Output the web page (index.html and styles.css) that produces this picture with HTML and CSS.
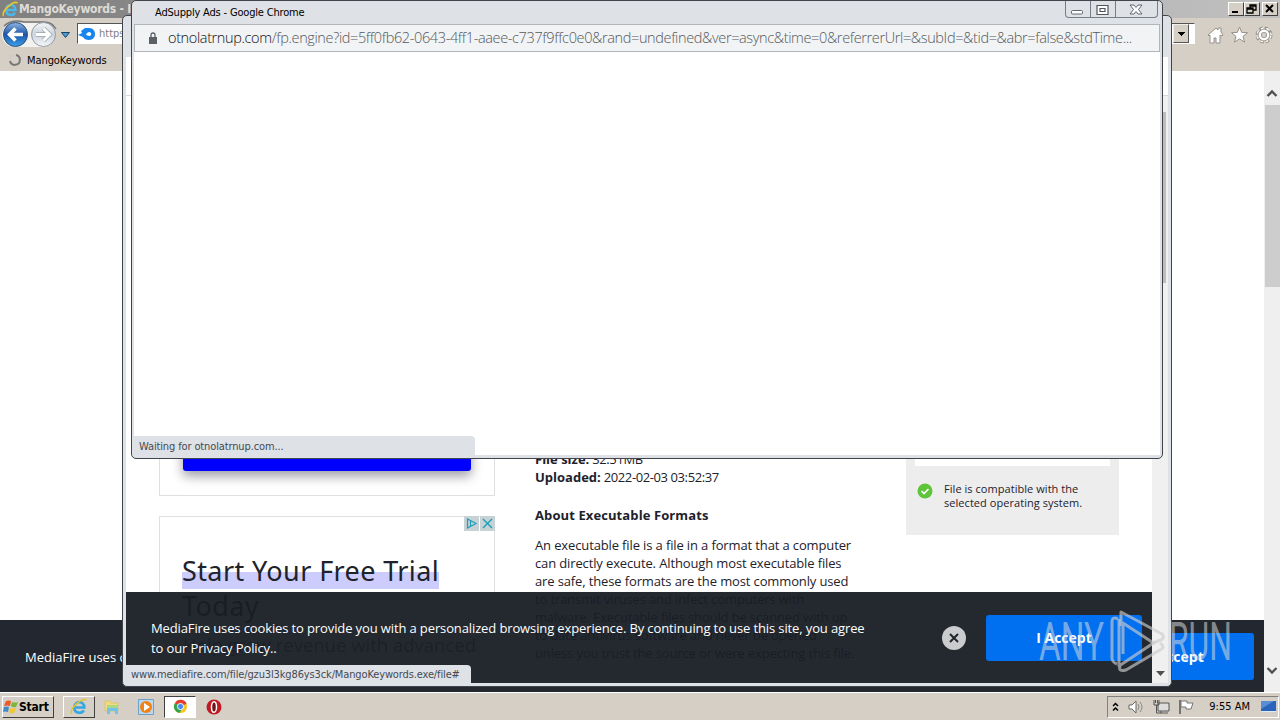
FILE: index.html
```html
<!DOCTYPE html>
<html lang="en">
<head>
<meta charset="utf-8">
<title>MangoKeywords</title>
<link rel="stylesheet" href="styles.css">
</head>
<body>
<div class="desktop">

    <!-- Internet Explorer -->
    <div class="ie">
        <div class="ie-title">
            <svg class="ie-logo" width="17" height="17" viewBox="0 0 17 17"><path d="M4 9h9.500C13.500 2 4 2.500 4 9c0 6 7.500 6 9 2.500" fill="none" stroke="#4bb8ec" stroke-width="2.500"/><path d="M1.500 15C-1 10 12-1 15.500 2" fill="none" stroke="#e3c52c" stroke-width="1.700"/></svg>
            <b>MangoKeywords - Internet Explorer</b>
            <div class="win-buttons">
                <span><svg width="14" height="12"><path d="M3 9h6" stroke="#000" stroke-width="2"/></svg></span>
                <span><svg width="14" height="12"><path d="M5 5V2h6v5H8M5 3h6M2 5h6v5H2zM2 6h6" fill="none" stroke="#000" stroke-width="1.300"/></svg></span>
                <span class="gap"><svg width="14" height="12"><path d="M3 2l7 7M10 2l-7 7" stroke="#000" stroke-width="2"/></svg></span>
            </div>
        </div>
        <div class="ie-nav">
            <svg class="ie-arrows" width="74" height="30" viewBox="0 0 74 30">
                <defs>
                    <linearGradient id="blue" x2="0" y2="1"><stop offset="0" stop-color="#8fb5e2"/><stop offset=".5" stop-color="#1d55a8"/><stop offset="1" stop-color="#3da0ea"/></linearGradient>
                    <linearGradient id="pale" x2="0" y2="1"><stop offset="0" stop-color="#f4f6f8"/><stop offset=".5" stop-color="#cbd3dc"/><stop offset="1" stop-color="#f5f8fb"/></linearGradient>
                </defs>
                <path d="M15 4h28a11 12 0 0 1 0 24H15A13 12 0 0 1 15 4" fill="#f3f2ef"/>
                <path d="M4 7Q12 0 24 3h20q8 0 12 7" fill="none" stroke="#777" stroke-width="1.500"/>
                <circle cx="15.500" cy="15.500" r="12" fill="url(#blue)" stroke="#28527f"/>
                <path d="M23 15.500H10M15.500 9.500l-6 6 6 6" fill="none" stroke="#fff" stroke-width="3.500"/>
                <circle cx="43.500" cy="15.500" r="12" fill="url(#pale)" stroke="#929ba5"/>
                <path d="M36 15.500h13M43.500 9.500l6 6-6 6" fill="none" stroke="#9aa3ac" stroke-width="4.500"/>
                <path d="M36 15.500h13M43.500 9.500l6 6-6 6" fill="none" stroke="#fff" stroke-width="3"/>
                <path d="M61.500 13.500h8l-4 5z" fill="#4b9bd4" stroke="#174468"/>
            </svg>
            <div class="ie-address">
                <svg width="18" height="14" viewBox="0 0 18 14"><path fill-rule="evenodd" d="M0 8l4-2-1-2 4-3h4c4 0 6 3 6 6s-2 6-6 6c-3 0-5-1-6-3zM8 8l3 1c3 0 3-4 0-4L9 6z" fill="#1685ee"/></svg>
                <span>https://www.mediafire.com/</span>
                <i class="drop"></i>
            </div>
            <svg class="ie-tools" width="72" height="20" viewBox="0 0 72 20">
                <g fill="#fff" stroke="#969188">
                    <path d="M2 10l8-7 2 2V3h3v4l2 3-1 1-2-1v8h-4v-5H8v5H4v-8l-1 1z"/>
                    <path d="M33.500 2l2.200 5.400 5.800.3-4.500 3.700 1.500 5.700-5-3.200-5 3.200 1.500-5.700-4.500-3.700 5.800-.3z"/>
                </g>
                <circle cx="58" cy="10" r="6.500" fill="none" stroke="#969188" stroke-width="4" stroke-dasharray="3.200 1.900"/>
                <circle cx="58" cy="10" r="6.300" fill="none" stroke="#fff" stroke-width="2.600" stroke-dasharray="2.200 2.900" stroke-dashoffset="-.5"/>
                <circle cx="58" cy="10" r="4.200" fill="none" stroke="#969188" stroke-width="4"/>
                <circle cx="58" cy="10" r="4.200" fill="none" stroke="#fff" stroke-width="2.400"/>
            </svg>
        </div>
        <div class="ie-tabs">
            <svg width="14" height="14" viewBox="0 0 14 14"><path d="M5 2a5 5 0 0 0-3 4" fill="none" stroke="#ccc" stroke-width="2"/><path d="M8 2a5 5 0 1 1-6 6" fill="none" stroke="#777" stroke-width="2"/></svg>
            <span>MangoKeywords</span>
        </div>
        <div class="ie-body">
            <div class="ie-page">
                <div class="ie-cookie"><span>MediaFire uses cookies</span><b>I Accept</b></div>
            </div>
            <div class="ie-scroll">
                <svg width="16" height="10"><path d="M3.500 8L8 3.500 12.500 8" fill="none" stroke="#505050" stroke-width="2.300"/></svg>
                <i></i>
                <svg class="down" width="16" height="10"><path d="M3.500 2L8 6.500 12.500 2" fill="none" stroke="#505050" stroke-width="2.300"/></svg>
            </div>
        </div>
    </div>

    <!-- Chrome with the MediaFire page -->
    <div class="chrome back">
        <div class="back-title"></div>
        <div class="back-bar"></div>
        <div class="back-body">
            <div class="page">
                <div class="ads">
                    <div class="ad first"><div class="blue-button"></div></div>
                    <div class="ad second">
                        <div class="ad-choice">
                            <svg width="15" height="15"><path d="M3.500 3v9l8.500-4.500z M6.500 5v5" fill="none" stroke="#1b9fb9" stroke-width="1.200"/></svg>
                            <svg width="15" height="15"><path d="M3 3l9 9M12 3l-9 9" stroke="#1b9fb9" stroke-width="1.400"/></svg>
                        </div>
                        <h2><span>Start Your Free Trial</span><br>Today</h2>
                        <p>Help grow revenue with advanced</p>
                    </div>
                </div>
                <div class="info">
                    <div class="meta"><b>File size:</b> 32.51MB</div>
                    <div class="meta"><b>Uploaded:</b> 2022-02-03 03:52:37</div>
                    <h3>About Executable Formats</h3>
                    <p>An executable file is a file in a format that a computer<br>can directly execute. Although most executable files<br>are safe, these formats are the most commonly used<br>to transmit viruses and infect computers with<br>malware. Executable files should be scanned with up<br>to date antivirus software and never be opened<br>unless you trust the source or were expecting this file.</p>
                </div>
                <div class="compat">
                    <div class="system">Copy of system</div>
                    <div class="compat-row">
                        <svg width="16" height="16" viewBox="0 0 16 16"><circle cx="8" cy="8" r="7.500" fill="#5ec439"/><path d="M4.500 8l2.500 2.500 4.500-4.500" fill="none" stroke="#fff" stroke-width="1.700"/></svg>
                        <span>File is compatible with the<br>selected operating system.</span>
                    </div>
                </div>
                <div class="cookie">
                    <p>MediaFire uses cookies to provide you with a personalized browsing experience. By continuing to use this site, you agree<br><span>to our Privacy Policy..</span></p>
                    <svg width="24" height="24"><circle cx="12" cy="12" r="12" fill="#caccce"/><path d="M8 8l8 8M16 8l-8 8" stroke="#20252e" stroke-width="2"/></svg>
                    <b>I Accept</b>
                </div>
                <div class="status link">www.mediafire.com/file/gzu3l3kg86ys3ck/MangoKeywords.exe/file#</div>
            </div>
            <div class="page-scroll"><i></i><svg width="16" height="18"><path d="M4 6h9l-4.500 5z" fill="#505050"/></svg></div>
        </div>
    </div>

    <!-- Popup -->
    <div class="chrome popup">
        <div class="popup-title">
            <span>AdSupply Ads - Google Chrome</span>
            <div class="controls">
                <svg width="24" height="17"><rect x="5.500" y="9.500" width="11" height="3.500" rx="1" fill="#fff" stroke="#646970"/></svg>
                <svg width="24" height="17"><path d="M6 4.500h11v9H6zM9 7.500h5v3H9z" fill="#fff" stroke="#50555c" stroke-width="1.200"/></svg>
                <svg width="41" height="17"><path d="M14 4h4l2 2.500L22 4h4l-3.500 4.500L26 13h-4l-2-2.500-2 2.500h-4l3.500-4.500z" fill="#fff" stroke="#646970"/></svg>
            </div>
        </div>
        <div class="url">
            <svg width="8" height="13" viewBox="0 0 8 13"><path d="M2 6V3q0-2 2-2t2 2v3" fill="none" stroke="#5b6066" stroke-width="1.300"/><path d="M0 5h8v7H0z" fill="#5b6066"/></svg>
            <span class="addr"><em>otnolatrnup.com</em>/fp.engine?id=5ff0fb62-0643-4ff1-aaee-c737f9ffc0e0&amp;rand=undefined&amp;ver=async&amp;time=0&amp;referrerUrl=&amp;subId=&amp;tid=&amp;abr=false&amp;stdTime...</span>
        </div>
        <div class="popup-page"><div class="status waiting">Waiting for otnolatrnup.com...</div></div>
    </div>

    <!-- Taskbar -->
    <div class="taskbar">
        <div class="start">
            <svg width="16" height="16" viewBox="0 0 16 16"><path d="M3 2q3-1 5 0L7 7Q4 6 1 7z" fill="#ec5a28"/><path d="M9 3q3 1 6 0l-2 5q-3 1-5-1z" fill="#7cb63b"/><path d="M1 8q3-1 5 0l-1 5q-3-1-5 0z" fill="#408cc9"/><path d="M7 9q3 1 6 0l-2 5q-3 1-5-1z" fill="#f5c62d"/></svg>
            <b>Start</b>
        </div>
        <div class="task ie-task"><svg width="18" height="18" viewBox="0 0 17 17"><path d="M4 9h9.500C13.500 2 4 2.500 4 9c0 6 7.500 6 9 2.500" fill="none" stroke="#35a7e6" stroke-width="2.500"/><path d="M1.500 15C-1 10 12-1 15.500 2" fill="none" stroke="#e3c52c" stroke-width="1.500"/></svg></div>
        <div class="task"><svg width="16" height="16" viewBox="0 0 16 16"><path d="M1 2h5l1 2h7v8H1z" fill="#f3da7c" stroke="#dcbd55" stroke-width=".7"/><path d="M3 6h11v4H3z" fill="#a9d889"/><path d="M3 15V9h11v6h-3v-3H6v3z" fill="#72c3e9"/></svg></div>
        <div class="task"><svg width="16" height="16" viewBox="0 0 16 16"><path d="M.5.500h15v15H.5z" fill="#b9d7ee" stroke="#6ba1cb"/><circle cx="8" cy="8" r="6" fill="#f08218"/><path d="M6 4v8l6-4z" fill="#fff"/></svg></div>
        <div class="task active"><svg width="15" height="15" viewBox="0 0 16 16"><circle cx="8" cy="8" r="7" fill="#f8c527"/><path d="M8 8L2 4.400A7 7 0 0 1 14.500 5z" fill="#e13e31"/><path d="M8 8L2 4.400A7 7 0 0 0 7 15l3.500-6z" fill="#2fa350"/><circle cx="8" cy="8" r="3.300" fill="#4789ec" stroke="#fff"/></svg></div>
        <div class="task"><svg width="16" height="16" viewBox="0 0 16 16"><circle cx="8" cy="8" r="7.500" fill="#bf1922"/><ellipse cx="8" cy="8" rx="2.500" ry="5.300" fill="#731016" stroke="#fff" stroke-width="1.500"/></svg></div>
        <div class="tray">
            <svg width="9" height="14"><path d="M2 6l2.500-2.500L7 6M2 10.500L4.500 8 7 10.500" fill="none" stroke="#000" stroke-width="1.500"/></svg>
            <svg width="17" height="16"><path d="M1 6h3l4-4v12l-4-4H1z" fill="#fff" stroke="#666"/><path d="M10 5q2 3 0 6M12 3q4 5 0 10" fill="none" stroke="#888"/></svg>
            <svg width="17" height="16"><path d="M5 4h11v8H5zM8 12v2h7" fill="#ddd" stroke="#555"/><path d="M1 1v5h5V1M2.500 1v3M4.500 1v3M3.500 6v8h5" fill="none" stroke="#555"/></svg>
            <svg width="17" height="16"><path d="M2 1v14" stroke="#555" stroke-width="1.500"/><path d="M3 2h6v2h6l-2 6H8V8H3z" fill="#fff" stroke="#777"/></svg>
            <span>9:55 AM</span>
            <svg width="15" height="13"><path d="M0 1h15v10H0z" fill="#2b65bb"/><path d="M0 1h13L0 9z" fill="#588ed4"/><path d="M0 11h15v1H0z" fill="#dfe8f3"/></svg>
        </div>
    </div>

    <svg class="watermark" width="220" height="76" viewBox="0 0 220 76">
        <g fill="#ddd" fill-opacity=".55" font-family="Roboto" font-weight="400" font-size="53">
            <text x="3" y="51" textLength="65" lengthAdjust="spacingAndGlyphs">ANY</text>
            <text x="133" y="51" textLength="63" lengthAdjust="spacingAndGlyphs">RUN</text>
        </g>
        <g fill="none" stroke="#ccc" stroke-opacity=".65" stroke-width="3" stroke-linejoin="round">
            <path d="M82 10q-6-3-6 3v36q0 4 5 6M87 45V14l32 21M85 17V3l41 22q4 5-4 7l-5 2"/>
            <path d="M83 10v47l36-24M84 57q-2 6 6 4l34-20q6-3 0-7"/>
        </g>
    </svg>
</div>
</body>
</html>
```
FILE: styles.css
```css
body {
    margin: 0;
    font-family: "DejaVu Sans Condensed", "DejaVu Sans", sans-serif;
    font-size: 11px;
    color: #000;
}
svg {
    display: block;
    flex-shrink: 0;
}
.desktop {
    position: relative;
    width: 1280px;
    height: 720px;
    overflow: hidden;
    background: #d5cfc6;
}

/* Internet Explorer */
.ie {
    display: flex;
    flex-direction: column;
    height: 692px;
}
.ie-title {
    display: flex;
    align-items: center;
    height: 18px;
    background: linear-gradient(90deg, #808080, #c0c0c0);
    color: #dedbd5;
    font-size: 12px;
    letter-spacing: -.25px;
}
.ie-logo {
    margin: 0 0 0 2px;
}
.win-buttons {
    display: flex;
    margin-left: auto;
    padding-right: 2px;
}
.win-buttons span {
    width: 14px;
    height: 12px;
    background: #d5cfc6;
    border: 1px solid;
    border-color: #fff #404040 #404040 #fff;
}
.win-buttons .gap {
    margin-left: 2px;
}
.ie-nav {
    display: flex;
    align-items: center;
    height: 31px;
}
.ie-address {
    display: flex;
    align-items: center;
    width: 1118px;
    height: 21px;
    box-sizing: border-box;
    border: 1px solid;
    border-color: #555 #fff #fff #555;
    background: #fff;
    margin-left: 3px;
    color: #808080;
    gap: 3px;
    font-size: 11px;
}
.drop {
    margin-left: auto;
    margin-right: 5px;
    width: 14px;
    height: 17px;
    background: linear-gradient(#000, #000) 4px 7px / 7px 1px no-repeat, linear-gradient(#000, #000) 5px 8px / 5px 1px no-repeat, linear-gradient(#000, #000) 6px 9px / 3px 1px no-repeat, linear-gradient(#000, #000) 7px 10px / 1px 1px no-repeat, #d5cfc6;
    border: 1px solid;
    border-color: #eee #555 #555 #eee;
}
.ie-tools {
    margin: 3px 0 0 11px;
}
.ie-tabs {
    display: flex;
    align-items: center;
    height: 22px;
    padding-left: 8px;
    gap: 5px;
    letter-spacing: -.08px;
}
.ie-body {
    display: flex;
    flex: 1;
    background: #fff;
}
.ie-page {
    display: flex;
    flex: 1;
    align-items: flex-end;
}
.ie-cookie {
    display: flex;
    align-items: center;
    justify-content: space-between;
    width: 100%;
    height: 72px;
    box-sizing: border-box;
    padding: 2px 10px 0 25px;
    background: #232830;
    color: #fff;
    font: 13px "Open Sans", sans-serif;
}
.ie-cookie b {
    width: 156px;
    height: 47px;
    margin-top: -2px;
    line-height: 48px;
    text-align: center;
    background: #0070f0;
    border-radius: 3px;
    font-size: 14px;
}
.ie-scroll {
    display: flex;
    flex-direction: column;
    width: 16px;
    padding-top: 17px;
    box-sizing: border-box;
    background: #efefef;
}
.ie-scroll i {
    height: 182px;
    margin: 7px 0 0 1px;
    background: #cdcdcd;
}
.ie-scroll .down {
    margin: auto 0 16px;
}

/* Chrome windows */
.chrome {
    position: absolute;
    display: flex;
    flex-direction: column;
    box-sizing: border-box;
    border: 1px solid #41454b;
    border-radius: 5px;
    background: #dee1e6;
    overflow: hidden;
}
.back {
    left: 122px;
    top: 15px;
    width: 1050px;
    height: 672px;
    padding: 0 3px 3px;
}
.back-title {
    height: 41px;
}
.back-bar {
    height: 38px;
    background: #fff;
    border-bottom: 1px solid #d5d7da;
}
.back-body {
    display: flex;
    flex: 1;
    min-height: 0;
}
.page {
    position: relative;
    display: flex;
    width: 1026px;
    background: #fff;
    overflow: hidden;
    font-family: "Open Sans", sans-serif;
    color: #1d222b;
}
.page-scroll {
    display: flex;
    flex-direction: column;
    justify-content: space-between;
    flex: 1;
    background: #f0f0f0;
}
.page-scroll i {
    height: 171px;
    margin: 16px 2px 0;
    background: #bdbdbd;
}
.ads {
    width: 336px;
    margin-left: 33px;
}
.ad {
    box-sizing: border-box;
    border: 1px solid #dfe0e2;
}
.first {
    display: flex;
    align-items: flex-end;
    height: 400px;
    padding: 0 23px 24px;
}
.blue-button {
    width: 100%;
    height: 50px;
    background: #00f;
    border-radius: 3px;
    box-shadow: 0 5px 12px rgba(0, 0, 30, .4);
}
.second {
    height: 300px;
    margin-top: 20px;
}
.ad-choice {
    display: flex;
    justify-content: flex-end;
    gap: 1px;
    margin: -1px -1px 0 0;
}
.ad-choice svg {
    background: #c7d2d4;
}
.second h2 {
    margin: 22px 0 0 22px;
    font: 400 27px/35px "Noto Sans", sans-serif;
    letter-spacing: .4px;
    color: #20222b;
}
.second h2 span {
    background: linear-gradient(transparent 55%, #ccccfd 55%);
}
.second p {
    margin: 9px 0 0 23px;
    font-size: 18.5px;
    line-height: 25px;
    color: #555;
    white-space: nowrap;
}
.info {
    width: 330px;
    margin: 354px 0 0 40px;
    font-size: 13px;
    line-height: 18px;
    white-space: nowrap;
}
.meta {
    letter-spacing: -.4px;
}
.meta b {
    letter-spacing: 0;
}
.info h3 {
    margin: 20px 0 12px;
    font-size: 13px;
    line-height: 18px;
    letter-spacing: .1px;
}
.info p {
    margin: 0;
    letter-spacing: -.13px;
}
.compat {
    width: 213px;
    height: 439px;
    margin-left: 41px;
    box-sizing: border-box;
    padding: 340px 9px 0;
    background: #ededed;
    font-size: 11px;
    line-height: 14px;
    letter-spacing: .05px;
}
.system {
    height: 30px;
    background: #fff;
    text-align: center;
    line-height: 32px;
}
.compat-row {
    display: flex;
    gap: 11px;
    margin: 16px 0 0 2px;
}
.compat-row svg {
    margin-top: 1px;
}
.cookie {
    position: absolute;
    left: 0;
    right: 0;
    bottom: 0;
    height: 91px;
    display: flex;
    align-items: center;
    box-sizing: border-box;
    padding: 0 10px 0 25px;
    background: rgba(24, 29, 37, .95);
    color: #fff;
}
.cookie p {
    width: 791px;
    margin: 0;
    font-size: 13px;
    line-height: 20px;
    letter-spacing: -.12px;
    white-space: nowrap;
}
.cookie b {
    width: 156px;
    height: 46px;
    margin-left: 20px;
    line-height: 46px;
    text-align: center;
    font-size: 14px;
    background: #0070f0;
    border-radius: 3px;
}
.status {
    position: absolute;
    left: 0;
    bottom: 0;
    box-sizing: border-box;
    background: #dee1e6;
    border-top-right-radius: 4px;
    color: #454a52;
    font: 11px "DejaVu Sans Condensed", sans-serif;
    letter-spacing: -.13px;
    white-space: nowrap;
}
.link {
    width: 345px;
    height: 18px;
    padding-left: 5px;
    line-height: 19px;
}
.popup {
    left: 131px;
    top: 0;
    width: 1032px;
    height: 459px;
    padding: 0 2px 3px;
}
.popup-title {
    display: flex;
    justify-content: space-between;
    height: 23px;
    padding: 0 2px 0 21px;
    line-height: 23px;
    letter-spacing: -.18px;
}
.controls {
    display: flex;
    height: 16px;
    border: 1px solid #777d84;
    border-top: 0;
    border-radius: 0 0 4px 4px;
}
.controls svg + svg {
    border-left: 1px solid #777d84;
}
.url {
    display: flex;
    align-items: center;
    height: 26px;
    padding-left: 14px;
    gap: 11px;
    background: #f1f3f4;
    border: 1px solid #b1b4b8;
    color: #55595e;
}
.addr {
    margin-top: -2px;
    font: 300 14.5px "Open Sans", sans-serif;
    letter-spacing: -.375px;
    white-space: nowrap;
}
.addr em {
    font-style: normal;
    color: #101114;
}
.popup-page {
    position: relative;
    flex: 1;
    background: #fff;
}
.waiting {
    width: 341px;
    height: 19px;
    padding-left: 5px;
    line-height: 21px;
}

/* Taskbar */
.taskbar {
    display: flex;
    align-items: center;
    height: 28px;
    box-sizing: border-box;
    border-top: 1px solid #fff;
    padding-left: 2px;
}
.start, .task {
    display: flex;
    align-items: center;
    height: 22px;
    box-sizing: border-box;
}
.start, .ie-task {
    border: 1px solid;
    border-color: #fff #404040 #404040 #fff;
}
.start {
    width: 52px;
    margin-right: 9px;
    font-size: 12px;
    letter-spacing: -.2px;
}
.task {
    width: 32px;
    margin-right: 2px;
    justify-content: center;
}
.ie-task {
    margin-right: 1px;
}
.active {
    background: #fff;
    border: 1px solid;
    border-color: #404040 #fff #fff #404040;
}
.tray {
    display: flex;
    align-items: center;
    width: 172px;
    height: 22px;
    margin-left: auto;
    margin-right: 1px;
    box-sizing: border-box;
    border: 1px solid;
    border-color: #808080 #fff #fff #808080;
    padding: 0 2px 0 3px;
    gap: 8px;
}
.tray span {
    flex: 1;
    margin-right: 3px;
    text-align: right;
    white-space: nowrap;
}
.watermark {
    position: absolute;
    left: 1036px;
    top: 609px;
}
```
